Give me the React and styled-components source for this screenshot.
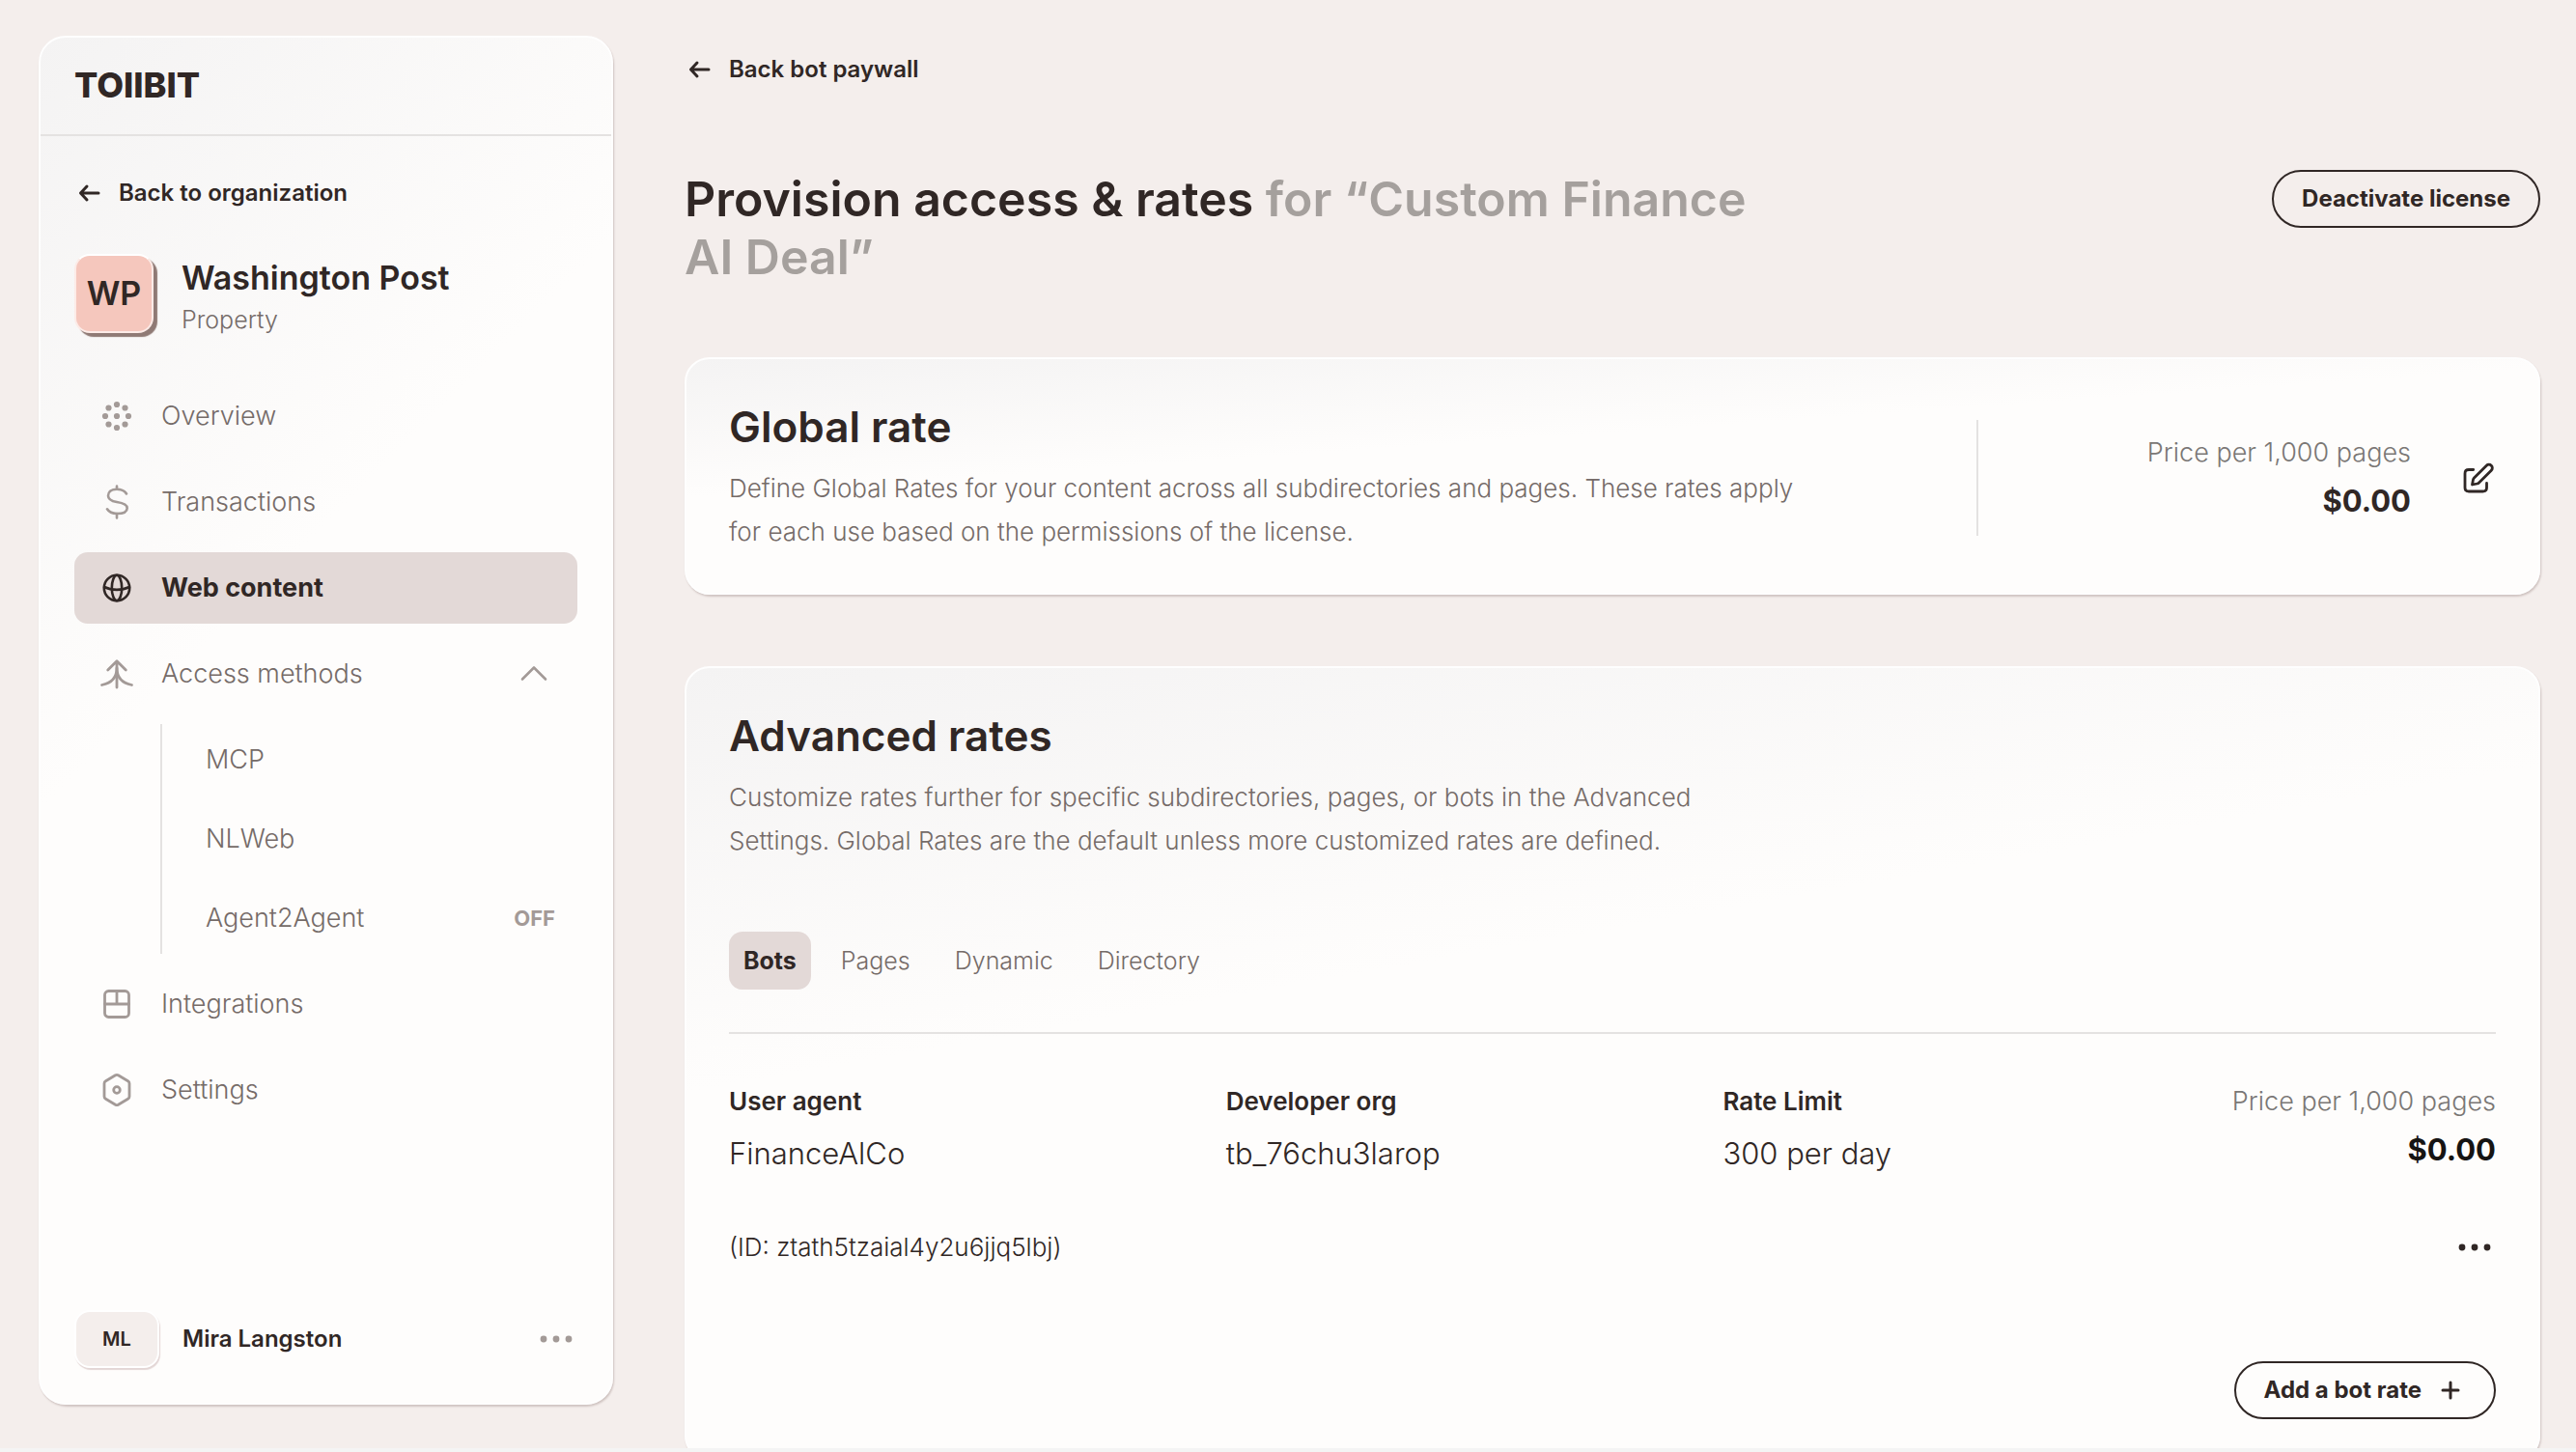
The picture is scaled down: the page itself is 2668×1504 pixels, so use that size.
import styled, { createGlobalStyle, css } from 'styled-components';

const ink = '#302725';
const muted = '#756b68';
const faint = '#a39a97';
const blush = '#e3d9d7';
const line = '#e4e2e1';
const canvas = '#f4eeec';

const GlobalStyle = createGlobalStyle`
  *,
  *::before,
  *::after {
    box-sizing: border-box;
  }

  body {
    margin: 0;
    background: #f4f4f4;
    color: ${ink};
    font-family: Inter, 'Liberation Sans', sans-serif;
    font-size: 26px;
    line-height: 36px;
    overflow: hidden;
  }

  a {
    color: inherit;
    text-decoration: none;
  }

  button {
    border: 0;
    padding: 0;
    background: none;
    color: inherit;
    font: inherit;
    cursor: pointer;
  }

  h1, h2, p, ul, dl, dd {
    margin: 0;
    padding: 0;
  }

  ul {
    list-style: none;
  }
`;

const Shell = styled.div`
  display: flex;
  gap: 74px;
  height: calc(100vh - 4px);
  padding: 0 37px 0 40px;
  background: ${canvas};
`;

const panel = css`
  border: 2px solid #fefefe;
  box-shadow: 1px 2px 2px rgba(80, 50, 45, 0.22);
`;

const Sidebar = styled.aside`
  ${panel}
  display: flex;
  flex-direction: column;
  flex: 0 0 595px;
  margin: 37px 0 45px;
  border-radius: 28px;
  background: linear-gradient(135deg, #f4f3f3, #fefdfc 40%);
`;

const Brand = styled.div`
  padding: 27px 35px 29px;
  border-bottom: 2px solid ${line};
  font-size: 36px;
  font-weight: 800;
  line-height: 44px;
`;

const SidebarBody = styled.div`
  display: flex;
  flex-direction: column;
  flex: 1;
  padding: 41px 35px 36px;
`;

const BackLink = styled.a`
  display: flex;
  align-items: center;
  gap: 14px;
  font-size: 24px;
  font-weight: 600;
`;

const Property = styled.div`
  display: flex;
  align-items: flex-start;
  gap: 29px;
  margin-top: 45px;
`;

const Avatar = styled.span`
  display: flex;
  align-items: center;
  justify-content: center;
  width: 82px;
  height: 82px;
  border: 2px solid #fcebe7;
  border-top-color: #fff;
  border-radius: 16px;
  background: #f5c7bd;
  box-shadow: 4px 4px 1px #8f7a75;
  font-size: 34px;
  font-weight: 600;
`;

const UserAvatar = styled(Avatar)`
  width: 88px;
  height: 60px;
  border-color: #fff;
  background: ${canvas};
  box-shadow: 1px 2px 1px #e3d6d5;
  font-size: 20px;
`;

const PropertyText = styled.div`
  padding-top: 3px;
`;

const PropertyName = styled.div`
  font-size: 34px;
  font-weight: 600;
  line-height: 44px;
`;

const PropertyKind = styled.div`
  margin-top: 3px;
  color: ${muted};
  font-size: 25px;
  font-weight: 300;
`;

const Nav = styled.nav`
  margin-top: 45px;
`;

const NavList = styled.ul`
  display: flex;
  flex-direction: column;
  gap: 15px;
`;

const navRow = css`
  display: flex;
  align-items: center;
  width: 100%;
  height: 74px;
  border-radius: 14px;
  color: ${muted};
  font-size: 27px;
  font-weight: 300;
  text-align: left;
`;

const NavItem = styled.a`
  ${navRow}
  gap: 28px;
  padding: 0 27px 0 26px;

  svg {
    color: ${faint};
  }

  ${({ $active }) =>
    $active &&
    css`
      background: ${blush};
      color: ${ink};
      font-weight: 700;

      svg {
        color: ${ink};
      }
    `}
`;

const NavLabel = styled.span`
  flex: 1;
`;

const SubList = styled.ul`
  display: flex;
  flex-direction: column;
  gap: 8px;
  margin: 15px 0 0 89px;
  border-left: 2px solid ${line};
`;

const SubItem = styled.a`
  ${navRow}
  justify-content: space-between;
  padding: 0 23px 0 45px;
`;

const Tag = styled.span`
  color: ${faint};
  font-size: 22px;
  font-weight: 700;
`;

const UserRow = styled.div`
  display: flex;
  align-items: center;
  gap: 24px;
  margin-top: auto;
  font-size: 24px;
  font-weight: 600;

  button {
    margin-left: auto;
    color: ${faint};
  }
`;

const IconButton = styled.button`
  display: flex;
`;

const Main = styled.main`
  flex: 1;
  min-width: 0;
  padding-top: 54px;
`;

const TitleRow = styled.div`
  display: flex;
  align-items: flex-start;
  justify-content: space-between;
  margin: 86px 0 74px;
`;

const Title = styled.h1`
  max-width: 1130px;
  font-size: 50px;
  font-weight: 600;
  line-height: 60px;

  span {
    color: #a5a09d;
  }
`;

const PillButton = styled.button`
  display: flex;
  align-items: center;
  gap: 14px;
  height: 60px;
  padding: 0 29px;
  border: 2px solid ${ink};
  border-radius: 30px;
  font-size: 24px;
  font-weight: 700;
`;

const Card = styled.section`
  ${panel}
  padding: 44px 44px 41px;
  border-radius: 26px;
  background: linear-gradient(${({ $angle }) => $angle}, #f4f3f3, #fefdfc 38%);

  & + & {
    margin-top: 74px;
  }
`;

const CardRow = styled.div`
  display: flex;
  align-items: center;
  justify-content: space-between;
`;

const CardTitle = styled.h2`
  font-size: 44px;
  font-weight: 600;
  line-height: 52px;
`;

const CardText = styled.p`
  max-width: ${({ $width }) => $width};
  margin-top: 15px;
  color: ${muted};
  font-weight: 300;
  line-height: 45px;
`;

const RateBox = styled.div`
  display: flex;
  align-items: center;
  justify-content: flex-end;
  gap: 52px;
  width: 538px;
  min-height: 120px;
  border-left: 2px solid ${line};
`;

const PriceBlock = styled.div`
  text-align: right;
`;

const PriceLabel = styled.div`
  color: #7a7775;
  font-size: 27px;
  font-weight: 300;
`;

const PriceValue = styled.div`
  margin-top: 12px;
  color: ${({ $color }) => $color};
  font-size: 31px;
  font-weight: 700;
  line-height: 40px;
`;

const Tabs = styled.div`
  display: flex;
  gap: 16px;
  margin-top: 72px;
  padding-bottom: 44px;
  border-bottom: 2px solid ${line};
`;

const Tab = styled.button`
  height: 60px;
  padding: 0 15px;
  border-radius: 14px;
  background: ${({ $active }) => ($active ? blush : 'transparent')};
  color: ${({ $active }) => ($active ? ink : muted)};
  font-size: 25px;
  font-weight: ${({ $active }) => ($active ? 700 : 300)};
`;

const Rate = styled.dl`
  display: grid;
  grid-template-columns: repeat(3, 9fr) 5fr;
  margin-top: 52px;
`;

const RateLabel = styled.dt`
  font-weight: 600;
`;

const RateValue = styled.dd`
  margin-top: 14px;
  font-size: 31px;
  font-weight: 300;
  line-height: 44px;
`;

const RateFooter = styled.div`
  display: flex;
  align-items: center;
  justify-content: space-between;
  margin-top: 57px;
  font-weight: 300;
`;

const CardActions = styled.div`
  display: flex;
  justify-content: flex-end;
  margin-top: 100px;
`;

const Icon = ({ size = 36, width = 3, children }) => (
  <svg
    width={size}
    height={size}
    viewBox={`0 0 ${size} ${size}`}
    fill="none"
    stroke="currentColor"
    strokeWidth={width}
    strokeLinecap="round"
    strokeLinejoin="round"
    aria-hidden="true"
  >
    {children}
  </svg>
);

const ArrowIcon = () => (
  <Icon size={32}>
    <path d="M25 16H7M13 9L6.5 16l6.5 7" />
  </Icon>
);

const PlusIcon = () => (
  <Icon size={32}>
    <path d="M16 8v16M8 16h16" />
  </Icon>
);

const DotsIcon = () => (
  <svg width="44" height="36" viewBox="0 0 44 36" fill="currentColor" aria-hidden="true">
    <circle cx="9" cy="18" r="3.4" />
    <circle cx="22" cy="18" r="3.4" />
    <circle cx="35" cy="18" r="3.4" />
  </svg>
);

const overviewDots = [
  [18, 18], [18, 6], [18, 30], [6, 18], [30, 18],
  [9.5, 9.5], [26.5, 9.5], [9.5, 26.5], [26.5, 26.5],
];

const OverviewIcon = () => (
  <Icon>
    {overviewDots.map(([cx, cy]) => (
      <circle key={`${cx}-${cy}`} cx={cx} cy={cy} r="3.1" fill="currentColor" stroke="none" />
    ))}
  </Icon>
);

const DollarIcon = () => (
  <Icon width={2.6}>
    <path d="M18 1.5v3M18 30v4.5" />
    <path d="M28 9.5C26 6.2 22 4.7 18 4.7c-5.500 0-9 2.800-9 6.800s3 5.500 9 6.500c7 1.100 10.700 2.500 10.700 6.200 0 3.800-4.200 5.800-10.700 5.800-4.500 0-8-1.500-10-4.700" />
  </Icon>
);

const GlobeIcon = () => (
  <Icon width={2.6}>
    <circle cx="18" cy="18" r="13.2" />
    <ellipse cx="18" cy="18" rx="5.2" ry="13.2" />
    <path d="M5 17c7.5 3.8 18.5 3.8 26 0" />
  </Icon>
);

const MergeIcon = () => (
  <Icon width={2.8}>
    <path d="M8.7 14L18 4.7l9.3 9.3M18 5v27" />
    <path d="M18 12c0 10-5.5 15.5-15.500 17.500M18 12c0 10 5.500 15.500 15.500 17.500" />
  </Icon>
);

const ChevronIcon = () => (
  <Icon width={2.6}>
    <path d="M6 23.5l12-12 12 12" />
  </Icon>
);

const LayoutIcon = () => (
  <Icon width={2.8}>
    <rect x="5.5" y="4.5" width="25" height="27" rx="4" />
    <path d="M5.5 18h25M18 4.5V18" />
  </Icon>
);

const HexIcon = () => (
  <Icon width={2.8}>
    <path d="M16.5 2.700L6.500 8.700Q5 9.600 5 11.300v13.400q0 1.700 1.500 2.600l10 6q1.500.8 3 0l10-6q1.500-.9 1.500-2.600V11.300q0-1.700-1.500-2.600l-10-6q-1.500-.8-3 0z" />
    <circle cx="18" cy="18" r="3.3" />
  </Icon>
);

const EditIcon = () => (
  <Icon width={2.8}>
    <path d="M12.7 9.5H8q-4 0-4 4V28q0 4 4 4h14.500q4 0 4-4v-4.500" />
    <path d="M11.500 25l1-5.200q.2-1 1-1.800L26.300 5.200a3.500 3.500 0 0 1 5 5L18.500 23q-.8.8-1.800 1z" />
  </Icon>
);

const links = [
  { label: 'Overview', icon: OverviewIcon },
  { label: 'Transactions', icon: DollarIcon },
  { label: 'Web content', icon: GlobeIcon, active: true },
  {
    label: 'Access methods',
    icon: MergeIcon,
    items: [{ label: 'MCP' }, { label: 'NLWeb' }, { label: 'Agent2Agent', tag: 'OFF' }],
  },
  { label: 'Integrations', icon: LayoutIcon },
  { label: 'Settings', icon: HexIcon },
];

const tabs = ['Bots', 'Pages', 'Dynamic', 'Directory'];

const details = [
  ['User agent', 'FinanceAlCo'],
  ['Developer org', 'tb_76chu3larop'],
  ['Rate Limit', '300 per day'],
];

const Price = ({ color = ink }) => (
  <PriceBlock>
    <PriceLabel>Price per 1,000 pages</PriceLabel>
    <PriceValue $color={color}>$0.00</PriceValue>
  </PriceBlock>
);

const NavGroup = ({ label, icon: GroupIcon, items }) => (
  <li>
    <NavItem as="button" type="button" aria-expanded="true">
      <GroupIcon />
      <NavLabel>{label}</NavLabel>
      <ChevronIcon />
    </NavItem>
    <SubList>
      {items.map((item) => (
        <li key={item.label}>
          <SubItem href="#">
            {item.label}
            {item.tag && <Tag>{item.tag}</Tag>}
          </SubItem>
        </li>
      ))}
    </SubList>
  </li>
);

const NavLink = ({ label, icon: LinkIcon, active }) => (
  <li>
    <NavItem href="#" $active={active} aria-current={active ? 'page' : undefined}>
      <LinkIcon />
      <NavLabel>{label}</NavLabel>
    </NavItem>
  </li>
);

const App = () => (
  <>
    <GlobalStyle />
    <Shell>
      <Sidebar>
        <Brand>TOIIBIT</Brand>
        <SidebarBody>
          <BackLink href="#">
            <ArrowIcon />
            Back to organization
          </BackLink>
          <Property>
            <Avatar>WP</Avatar>
            <PropertyText>
              <PropertyName>Washington Post</PropertyName>
              <PropertyKind>Property</PropertyKind>
            </PropertyText>
          </Property>
          <Nav>
            <NavList>
              {links.map((link) =>
                link.items ? (
                  <NavGroup key={link.label} {...link} />
                ) : (
                  <NavLink key={link.label} {...link} />
                ),
              )}
            </NavList>
          </Nav>
          <UserRow>
            <UserAvatar>ML</UserAvatar>
            Mira Langston
            <IconButton type="button" aria-label="Account menu">
              <DotsIcon />
            </IconButton>
          </UserRow>
        </SidebarBody>
      </Sidebar>

      <Main>
        <BackLink href="#">
          <ArrowIcon />
          Back bot paywall
        </BackLink>
        <TitleRow>
          <Title>
            Provision access &amp; rates <span>for “Custom Finance AI Deal”</span>
          </Title>
          <PillButton type="button">Deactivate license</PillButton>
        </TitleRow>

        <Card $angle="176deg">
          <CardRow>
            <div>
              <CardTitle>Global rate</CardTitle>
              <CardText $width="1120px">
                Define Global Rates for your content across all subdirectories and pages. These
                rates apply for each use based on the permissions of the license.
              </CardText>
            </div>
            <RateBox>
              <Price />
              <IconButton type="button" aria-label="Edit global rate">
                <EditIcon />
              </IconButton>
            </RateBox>
          </CardRow>
        </Card>

        <Card $angle="170deg">
          <CardTitle>Advanced rates</CardTitle>
          <CardText $width="1050px">
            Customize rates further for specific subdirectories, pages, or bots in the Advanced
            Settings. Global Rates are the default unless more customized rates are defined.
          </CardText>
          <Tabs role="tablist">
            {tabs.map((tab, i) => (
              <Tab key={tab} type="button" role="tab" aria-selected={i === 0} $active={i === 0}>
                {tab}
              </Tab>
            ))}
          </Tabs>
          <Rate>
            {details.map(([label, value]) => (
              <div key={label}>
                <RateLabel>{label}</RateLabel>
                <RateValue>{value}</RateValue>
              </div>
            ))}
            <Price color="#161413" />
          </Rate>
          <RateFooter>
            (ID: ztath5tzaial4y2u6jjq5lbj)
            <IconButton type="button" aria-label="Rate options">
              <DotsIcon />
            </IconButton>
          </RateFooter>
          <CardActions>
            <PillButton type="button">
              Add a bot rate
              <PlusIcon />
            </PillButton>
          </CardActions>
        </Card>
      </Main>
    </Shell>
  </>
);

export default App;
